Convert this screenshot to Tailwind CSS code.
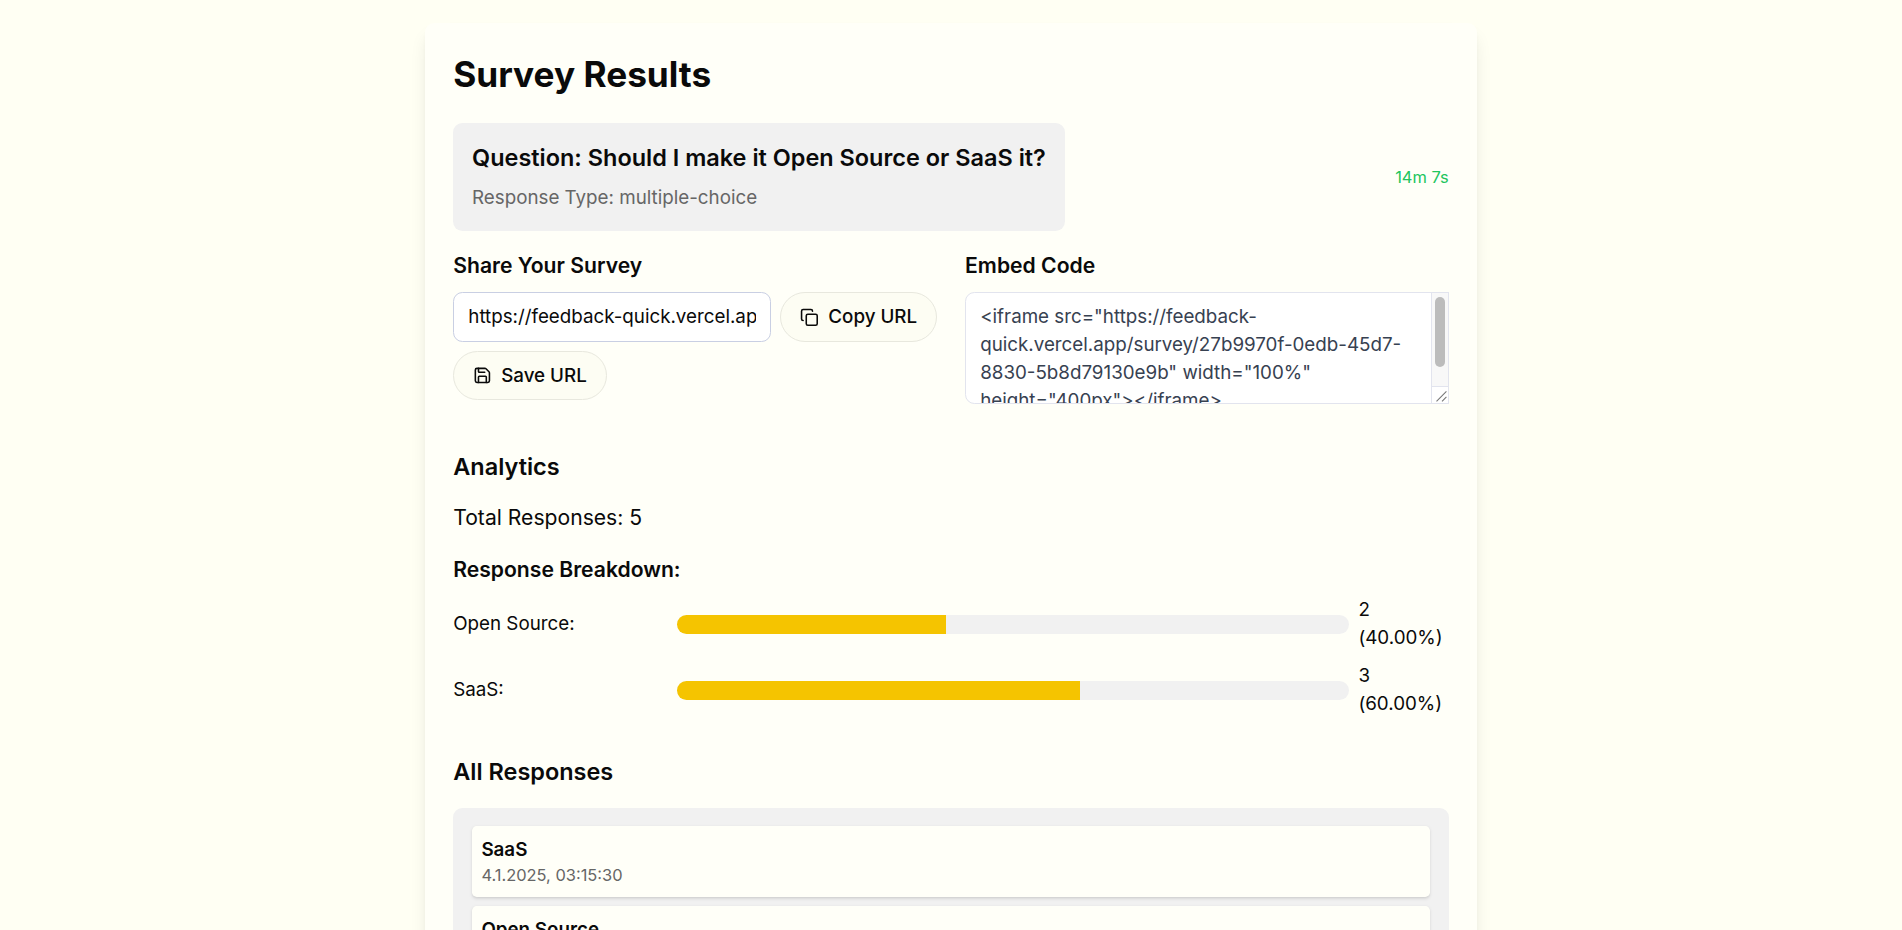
<!DOCTYPE html>
<html lang="en">
<head>
    <meta charset="UTF-8">
    <meta name="viewport" content="width=device-width, initial-scale=1.0">
    <title>Survey Results</title>
    <script src="https://cdn.jsdelivr.net/npm/@tailwindcss/browser@4"></script>
</head>
<body class="h-screen overflow-hidden bg-[#fffff3] font-['Inter',sans-serif] text-[#0a0a0a]">
    <div class="[zoom:1.174]">
        <div class="max-w-4xl mx-auto mt-5 p-6 pt-[25px] bg-[#fffff8] rounded-lg shadow-lg">
            <h1 class="text-3xl font-bold mb-6">Survey Results</h1>

            <!-- Question -->
            <div class="flex justify-between items-center mb-4">
                <div class="bg-[#f1f1f1] p-4 rounded-lg">
                    <h2 class="text-xl font-semibold mb-2">Question: Should I make it Open Source or SaaS it?</h2>
                    <p class="text-[#666666]">Response Type: multiple-choice</p>
                </div>
                <span class="text-sm text-[#22c55e]">14m 7s</span>
            </div>

            <!-- Share / embed -->
            <div class="grid grid-cols-2 gap-6 mb-10">
                <div>
                    <h3 class="text-lg font-semibold mb-2">Share Your Survey</h3>
                    <div class="flex flex-wrap gap-2">
                        <input readonly value="https://feedback-quick.vercel.app/survey/27b9970f-0edb-45d7-8830-5b8d79130e9b" class="flex-1 min-w-0 h-[42px] px-3 bg-white border border-[#c9cfe3] rounded-lg outline-none">
                        <button class="flex items-center gap-2 h-[42px] px-4 bg-[#fdfdf3] border border-[#e8e8de] rounded-full font-medium">
                            <svg class="w-4 h-4" viewBox="0 0 24 24" fill="none" stroke="currentColor" stroke-width="2" stroke-linecap="round" stroke-linejoin="round"><rect x="8" y="8" width="14" height="14" rx="2"/><path d="M4 16c-1.1 0-2-.9-2-2V4c0-1.1.9-2 2-2h10c1.1 0 2 .9 2 2"/></svg>
                            Copy URL
                        </button>
                        <div class="w-full">
                            <button class="flex items-center gap-2 h-[42px] px-4 bg-[#fdfdf3] border border-[#e8e8de] rounded-full font-medium">
                                <svg class="w-4 h-4" viewBox="0 0 24 24" fill="none" stroke="currentColor" stroke-width="2" stroke-linecap="round" stroke-linejoin="round"><path d="M15.2 3a2 2 0 0 1 1.4.6l3.8 3.8a2 2 0 0 1 .6 1.4V19a2 2 0 0 1-2 2H5a2 2 0 0 1-2-2V5a2 2 0 0 1 2-2z"/><path d="M17 21v-7a1 1 0 0 0-1-1H8a1 1 0 0 0-1 1v7"/><path d="M7 3v4a1 1 0 0 0 1 1h7"/></svg>
                                Save URL
                            </button>
                        </div>
                    </div>
                </div>
                <div>
                    <h3 class="text-lg font-semibold mb-2">Embed Code</h3>
                    <div class="relative h-[95px]">
                        <textarea readonly class="block w-full h-full pl-3 pr-[27px] py-2 bg-white border border-[#e2e4ee] rounded-lg text-[#374151] outline-none overflow-hidden resize-none">&lt;iframe src="https://feedback-quick.vercel.app/survey/27b9970f-0edb-45d7-8830-5b8d79130e9b" width="100%" height="400px"&gt;&lt;/iframe&gt;</textarea>
                        <!-- scrollbar + resize corner -->
                        <div class="absolute top-0 right-0 bottom-0 w-[15px] flex flex-col bg-[#f8f8f8] border border-[#e2e4ee]">
                            <div class="flex-1 pt-[3px] px-[2px]">
                                <div class="h-[60px] bg-[#bcbcbc] rounded-full"></div>
                            </div>
                            <div class="h-[14px] bg-white border-t border-[#e2e4ee]">
                                <svg class="w-full h-full" viewBox="0 0 14 14" fill="none" stroke="#777777" stroke-width="1"><path d="M4 13 13 4M9 13l4-4"/></svg>
                            </div>
                        </div>
                    </div>
                </div>
            </div>

            <!-- Analytics -->
            <h3 class="text-xl font-semibold mb-4">Analytics</h3>
            <p class="text-lg mb-4">Total Responses: 5</p>
            <h4 class="text-lg font-semibold mb-2">Response Breakdown:</h4>
            <div class="space-y-2 mb-8">
                <div class="flex items-center">
                    <span class="w-[191px] shrink-0">Open Source:</span>
                    <div class="flex-1 h-4 bg-[#f1f1f1] rounded-full">
                        <div class="h-4 w-2/5 bg-[#f5c400] rounded-l-full"></div>
                    </div>
                    <span class="w-[85px] shrink-0 pl-2">2 (40.00%)</span>
                </div>
                <div class="flex items-center">
                    <span class="w-[191px] shrink-0">SaaS:</span>
                    <div class="flex-1 h-4 bg-[#f1f1f1] rounded-full">
                        <div class="h-4 w-3/5 bg-[#f5c400] rounded-l-full"></div>
                    </div>
                    <span class="w-[85px] shrink-0 pl-2">3 (60.00%)</span>
                </div>
            </div>

            <!-- Responses -->
            <h3 class="text-xl font-semibold mb-4">All Responses</h3>
            <div class="bg-[#f1f1f1] p-4 rounded-lg space-y-2">
                <div class="p-2 bg-[#fffff8] rounded shadow">
                    <p class="font-semibold">SaaS</p>
                    <p class="text-sm text-[#666666]">4.1.2025, 03:15:30</p>
                </div>
                <div class="p-2 bg-[#fffff8] rounded shadow">
                    <p class="font-semibold">Open Source</p>
                </div>
            </div>
        </div>
    </div>
</body>
</html>
